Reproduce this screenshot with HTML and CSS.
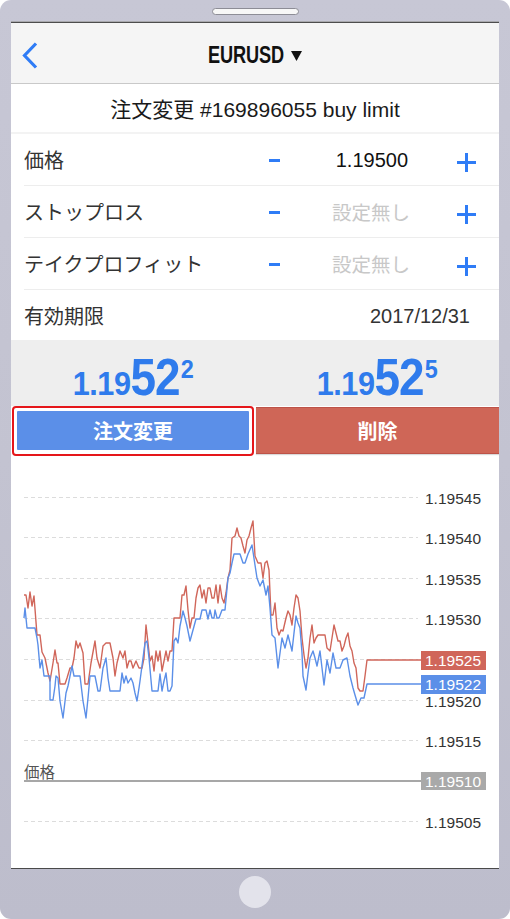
FILE: index.html
```html
<!DOCTYPE html>
<html lang="ja">
<head>
<meta charset="utf-8">
<title>EURUSD 注文変更</title>
<link rel="stylesheet" href="styles.css">
</head>
<body>
<div class="phone">
  <div class="bezel-top"><div class="notch"></div></div>
  <div class="screen">
    <header class="nav">
      <div class="nav-left">
        <svg class="back" width="16" height="27" viewBox="0 0 16 27"><polyline points="14,1.5 2.5,13.5 14,25.5" fill="none" stroke="#2f7cf6" stroke-width="3.2" stroke-linecap="butt" stroke-linejoin="miter"/></svg>
      </div>
      <div class="nav-title"><span class="sym">EURUSD</span><svg class="tri" width="11" height="11" viewBox="0 0 11 11"><polygon points="0,1 11,1 5.5,11" fill="#111"/></svg></div>
      <div class="nav-right"></div>
    </header>
    <div class="subtitle">注文変更 #169896055 buy limit</div>
    <div class="rows">
      <div class="row">
        <span class="label">価格</span>
        <span class="minus"></span>
        <span class="value">1.19500</span>
        <span class="plus"></span>
      </div>
      <div class="row">
        <span class="label">ストップロス</span>
        <span class="minus"></span>
        <span class="value empty">設定無し</span>
        <span class="plus"></span>
      </div>
      <div class="row">
        <span class="label">テイクプロフィット</span>
        <span class="minus"></span>
        <span class="value empty">設定無し</span>
        <span class="plus"></span>
      </div>
      <div class="row row-expiry">
        <span class="label">有効期限</span>
        <span class="expiry">2017/12/31</span>
      </div>
    </div>
    <div class="quotes">
      <div class="quote"><span class="price"><span class="p-s">1.19</span><span class="p-b">52</span><span class="p-u">2</span></span></div>
      <div class="quote"><span class="price"><span class="p-s">1.19</span><span class="p-b">52</span><span class="p-u">5</span></span></div>
    </div>
    <div class="actions">
      <div class="focus"><button class="btn btn-modify">注文変更</button></div>
      <button class="btn btn-delete">削除</button>
    </div>
    <div class="chart">
      <svg width="488" height="409" viewBox="11 458 488 409">
        <g stroke="#dcdcdc" stroke-width="1" stroke-dasharray="4 3">
          <line x1="24" y1="499.5" x2="418" y2="499.5"/>
          <line x1="24" y1="539.5" x2="418" y2="539.5"/>
          <line x1="24" y1="580.5" x2="418" y2="580.5"/>
          <line x1="24" y1="620.5" x2="418" y2="620.5"/>
          <line x1="24" y1="661.5" x2="418" y2="661.5"/>
          <line x1="24" y1="702.5" x2="418" y2="702.5"/>
          <line x1="24" y1="742.5" x2="418" y2="742.5"/>
          <line x1="24" y1="823.5" x2="418" y2="823.5"/>
        </g>
        <g class="axis" fill="#333">
          <text x="425" y="506">1.19545</text>
          <text x="425" y="546">1.19540</text>
          <text x="425" y="587">1.19535</text>
          <text x="425" y="627">1.19530</text>
          <text x="425" y="709">1.19520</text>
          <text x="425" y="749">1.19515</text>
          <text x="425" y="830">1.19505</text>
        </g>
        <line x1="24" y1="783" x2="421" y2="783" stroke="#8a8a8a" stroke-width="1.3"/>
        <text class="axis" x="24" y="780" fill="#555">価格</text>
        <rect x="421" y="774" width="65" height="18" fill="#a9a9a9"/>
        <text class="axis" x="425" y="789" fill="#fff">1.19510</text>
        <polyline fill="none" stroke="#d0665a" stroke-width="1.4" stroke-linejoin="round" points="24,597 26,597 28,610 30,594 32,608 34,598 37,637 40,637 42,654 45,660 48,675 50,683 53,665 55,652 57,665 58,665 60,686 65,686 67,680 70,670 72,670 74,660 76,643 78,650 80,645 83,655 85,686 88,686 91,665 95,643 97,660 100,670 103,648 106,645 110,645 113,660 115,678 117,665 120,653 123,660 125,653 127,670 129,663 131,663 133,670 136,663 139,670 142,670 144,660 146,627 148,645 150,663 152,658 154,673 156,653 158,663 160,653 162,673 164,663 166,653 168,663 170,653 172,653 174,620 178,620 180,620 182,597 184,597 186,588 188,612 190,630 192,620 194,620 196,600 198,590 200,587 202,600 204,592 206,605 208,590 210,590 212,600 214,600 216,587 218,605 220,587 222,600 224,605 226,595 228,580 230,572 232,540 235,538 237,530 239,538 241,540 243,548 245,555 247,542 249,538 251,530 253,523 255,558 258,565 261,565 263,580 265,565 267,563 269,572 271,617 273,617 275,605 277,630 279,637 281,632 283,633 286,620 288,613 290,617 292,627 294,610 296,597 298,600 300,613 302,640 304,657 306,670 308,660 310,640 312,627 314,645 316,640 318,637 322,637 325,637 327,650 330,653 332,640 334,627 336,635 338,643 340,643 342,653 344,648 346,640 348,635 350,648 352,653 354,665 356,670 358,690 360,693 363,693 365,678 367,662 421,662"/>
        <polyline fill="none" stroke="#5b8fe8" stroke-width="1.4" stroke-linejoin="round" points="24,620 25,610 27,630 35,630 37,640 38,647 40,670 42,662 44,678 50,678 50,702 53,702 55,688 56,678 58,680 60,703 63,720 66,695 68,688 70,678 72,668 74,678 80,678 83,703 86,720 88,700 90,678 95,678 97,688 98,693 100,693 103,670 106,660 108,680 110,693 120,693 122,675 124,685 126,678 128,685 131,680 133,685 135,695 137,703 139,690 140,683 143,660 145,645 147,643 149,660 152,693 158,693 160,676 162,693 164,683 166,675 168,693 170,693 172,688 174,643 176,640 178,645 180,628 183,613 185,620 187,628 190,643 193,632 196,621 200,621 202,612 206,612 208,621 210,612 212,620 214,620 215,612 217,620 219,620 222,612 225,612 228,580 230,575 232,565 234,556 240,556 243,565 245,565 248,556 252,547 255,567 257,580 260,588 263,582 266,597 268,588 270,610 272,637 275,640 278,670 280,655 282,640 285,650 288,637 290,645 292,653 294,635 296,618 298,625 300,630 302,655 303,678 306,692 308,675 310,660 313,653 315,660 317,668 320,653 322,670 324,687 327,662 330,675 333,655 336,670 340,670 343,662 347,660 350,678 353,690 355,697 358,707 361,700 364,700 367,686 421,686"/>
        <rect x="421" y="653" width="65" height="19" fill="#d0665a"/>
        <text class="axis" x="425" y="668" fill="#fff">1.19525</text>
        <rect x="421" y="677" width="65" height="19" fill="#5b8fe8"/>
        <text class="axis" x="425" y="692" fill="#fff">1.19522</text>
      </svg>
    </div>
  </div>
  <div class="bezel-bottom"><div class="home"></div></div>
</div>
</body>
</html>
```

FILE: styles.css
```css
html, body {
  margin: 0;
  padding: 0;
  background: #ffffff;
}

body {
  font-family: "Liberation Sans", "Noto Sans CJK JP", sans-serif;
  color: #222;
}

.phone {
  width: 510px;
  height: 919px;
  box-sizing: border-box;
  background: linear-gradient(180deg, #c7c7d5 0%, #c3c3d1 50%, #bdbdcc 100%);
  border-radius: 11px;
  display: flex;
  flex-direction: column;
  overflow: hidden;
}

.bezel-top {
  height: 21px;
  flex: 0 0 21px;
  display: flex;
  justify-content: center;
  align-items: flex-start;
  box-sizing: border-box;
  padding-top: 8px;
}

.notch {
  width: 85px;
  height: 5px;
  border: 1px solid #8d8d96;
  border-radius: 4px;
  background: #f7f7f7;
}

.screen {
  margin: 0 11px;
  flex: 0 0 848px;
  box-sizing: border-box;
  background: #fff;
  border-top: 1px solid #a9a9ad;
  border-bottom: 1px solid #4a4a4a;
  display: flex;
  flex-direction: column;
  overflow: hidden;
}

.nav {
  height: 60px;
  flex: 0 0 60px;
  background: #f5f5f5;
  border-top: 1px solid #4d4d4d;
  border-bottom: 1px solid #c9c9c9;
  display: grid;
  grid-template-columns: 80px 1fr 80px;
  align-items: center;
}

.nav-left {
  padding-left: 11px;
  display: flex;
  align-items: center;
  padding-top: 4px;
}

.nav-title {
  display: flex;
  justify-content: center;
  align-items: center;
  gap: 6px;
  padding-top: 4px;
}

.sym {
  display: inline-block;
  font-family: "Liberation Sans", sans-serif;
  font-weight: bold;
  font-size: 23px;
  color: #111;
  transform: scaleX(0.79);
  margin: 0 -10px;
  letter-spacing: -0.2px;
}

.tri {
  display: block;
  margin-left: 2px;
}

.subtitle {
  height: 50px;
  flex: 0 0 50px;
  display: flex;
  align-items: center;
  justify-content: center;
  font-size: 21px;
  color: #1a1a1a;
  border-bottom: 2px solid #f3f3f3;
  padding-top: 0;
  box-sizing: border-box;
}

.rows {
  display: flex;
  flex-direction: column;
}

.row {
  margin-left: 13px;
  height: 52px;
  box-sizing: border-box;
  border-bottom: 1px solid #ededed;
  display: grid;
  grid-template-columns: 1fr 40px 140px 65px;
  align-items: center;
  font-size: 20px;
  padding-top: 2px;
}

.row-expiry {
  grid-template-columns: 1fr auto;
  border-bottom: none;
  height: 50px;
  padding-right: 29px;
}

.label {
  color: #333;
  font-family: "Noto Sans CJK JP", sans-serif;
  font-size: 20px;
  padding-bottom: 2px;
}

.value {
  text-align: right;
  padding-right: 26px;
  color: #111;
  font-size: 20px;
}

.value.empty {
  color: #c8c8c8;
  font-family: "Noto Sans CJK JP", sans-serif;
  font-size: 19.5px;
  padding-right: 24px;
  padding-bottom: 2px;
}

.expiry {
  color: #333;
  font-size: 20px;
}

.minus {
  justify-self: center;
  width: 11px;
  height: 3px;
  background: #2f7cf6;
}

.plus {
  justify-self: center;
  position: relative;
  width: 19px;
  height: 19px;
  margin-top: 4px;
}

.plus::before,
.plus::after {
  content: "";
  position: absolute;
  background: #2f7cf6;
}

.plus::before {
  left: 0;
  right: 0;
  top: 8px;
  height: 3px;
}

.plus::after {
  top: 0;
  bottom: 0;
  left: 8px;
  width: 3px;
}

.quotes {
  height: 66px;
  flex: 0 0 66px;
  background: #eeeeee;
  display: grid;
  grid-template-columns: 1fr 1fr;
  align-items: center;
}

.quote {
  display: flex;
  justify-content: center;
  padding-top: 3px;
}

.price {
  display: inline-block;
  white-space: nowrap;
  color: #2f7bec;
  font-family: "Liberation Sans", sans-serif;
  font-weight: bold;
  transform: scaleX(0.9);
  line-height: 52px;
}

.p-s {
  font-size: 34px;
  letter-spacing: -0.5px;
}

.p-b {
  font-size: 51px;
  letter-spacing: -1px;
}

.p-u {
  font-size: 26px;
  vertical-align: 17px;
  margin-left: 1px;
}

.actions {
  height: 50px;
  flex: 0 0 50px;
  display: grid;
  grid-template-columns: 244px 1fr;
}

.focus {
  margin: 0 1px;
  border: 2px solid #e5161a;
  border-radius: 4px;
  padding: 3px 3px 4px 3px;
  background: #fff;
  display: flex;
}

.btn {
  border: none;
  margin: 0;
  font-family: "Noto Sans CJK JP", sans-serif;
  font-weight: bold;
  font-size: 20px;
  color: #fff;
  cursor: pointer;
  padding: 0;
}

.btn-modify {
  flex: 1;
  background: #5b8fe8;
  border-radius: 1px;
}

.btn-delete {
  margin-top: 1px;
  margin-left: 1px;
  height: 47px;
  background: #cf6657;
  border-top: 1px solid #bd5348;
  border-bottom: 1px solid #bd5348;
  box-shadow: 0 1px 1px #dadada;
}

.chart {
  flex: 1;
  display: flex;
}

.chart svg {
  display: block;
}

.axis {
  font-family: "Liberation Sans", "Noto Sans CJK JP", sans-serif;
  font-size: 15.5px;
}

.bezel-bottom {
  flex: 1;
  display: flex;
  justify-content: center;
  align-items: center;
  padding-bottom: 4px;
}

.home {
  width: 32px;
  height: 32px;
  border-radius: 50%;
  background: #e3e3eb;
}
```
